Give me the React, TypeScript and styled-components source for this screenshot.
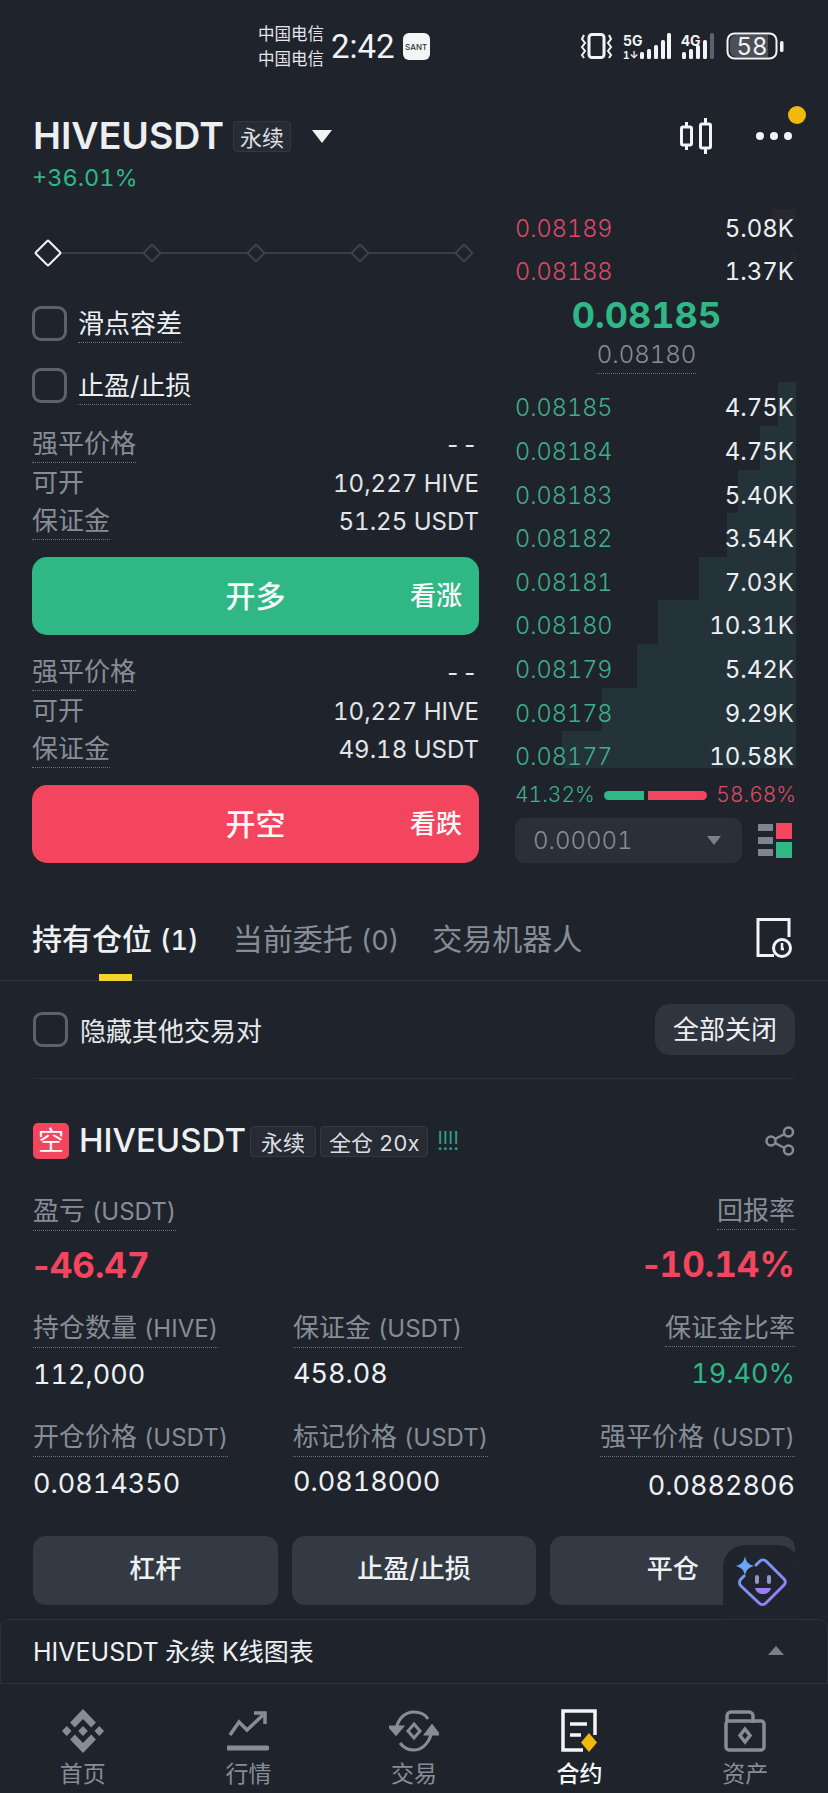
import React from 'react';
import styled, { createGlobalStyle } from 'styled-components';

const GlobalStyle = createGlobalStyle`
  html, body {
    margin: 0;
    padding: 0;
    background: #1f242c;
  }
  * {
    box-sizing: border-box;
  }
`;

const GREEN = '#2fb786';
const RED = '#f4455f';
const GRAY = '#878d96';
const WHITE = '#eef0f2';

const Page = styled.div`
  position: relative;
  width: 828px;
  height: 1793px;
  overflow: hidden;
  background: #1f242c;
  color: ${WHITE};
  font-family: Inter, 'Noto Sans CJK SC', sans-serif;
  font-variant-numeric: tabular-nums;
`;

const StatusBar = styled.div`
  display: flex;
  height: 100px;
  padding: 22px 38px 0 258px;
`;

const Carrier = styled.div`
  width: 73px;
  font-size: 16.5px;
  line-height: 25px;
  color: #e4e6e9;
`;

const Clock = styled.div`
  font-family: Roboto, sans-serif;
  font-size: 33px;
  font-weight: 400;
  line-height: 50px;
  color: #f2f3f5;
`;

const AppBadge = styled.div`
  width: 27px;
  height: 27px;
  margin: 11px 0 0 8px;
  border-radius: 6px;
  background: #f4f5f5;
  color: #333;
  font-size: 8px;
  font-weight: 500;
  line-height: 29px;
  text-align: center;
`;

const StatusIcons = styled.svg`
  margin-left: auto;
  margin-top: 10px;
`;

const TitleBar = styled.div`
  display: flex;
  align-items: center;
  height: 54px;
  margin-top: 9px;
  padding: 0 36px 0 33px;
`;

const Symbol = styled.div`
  font-size: 37.5px;
  font-weight: 600;
  line-height: 44px;
  color: #eceef0;
`;

const Tag = styled.span`
  display: inline-flex;
  align-items: center;
  height: 31px;
  padding: 0 ${(p) => p.$px || 6}px;
  margin-left: ${(p) => p.$ml || 6}px;
  border: 1px solid #333943;
  border-radius: 4px;
  background: #272c34;
  font-size: 22px;
  color: #dcdfe3;
`;

const DownCaret = styled.div`
  width: 0;
  height: 0;
  margin-left: 21px;
  border-left: 10px solid transparent;
  border-right: 10px solid transparent;
  border-top: 13px solid #f2f3f5;
`;

const TitleActions = styled.div`
  display: flex;
  align-items: center;
  gap: 43px;
  margin-left: auto;
`;

const Notice = styled.span`
  position: absolute;
  top: 106px;
  left: 788px;
  width: 18px;
  height: 18px;
  border-radius: 50%;
  background: #f0b90b;
`;

const Change = styled.div`
  padding-left: 32px;
  font-size: 23.5px;
  line-height: 29px;
  color: ${GREEN};
`;

const TradeArea = styled.div`
  display: grid;
  grid-template-columns: 447px 281px;
  column-gap: 36px;
  height: 656px;
  margin-top: 15px;
  padding-left: 32px;
`;

const FormColumn = styled.div`
  display: flex;
  flex-direction: column;
`;

const LeverSlider = styled.div`
  position: relative;
  display: flex;
  align-items: center;
  justify-content: space-between;
  height: 28px;
  margin: 32px 0 0 3px;
  padding-right: 8px;
  &::before {
    content: '';
    position: absolute;
    left: 10px;
    right: 12px;
    top: 13px;
    height: 2px;
    background: #373d46;
  }
`;

const LeverMark = styled.span`
  position: relative;
  width: ${(p) => (p.$active ? 20 : 14)}px;
  height: ${(p) => (p.$active ? 20 : 14)}px;
  margin: ${(p) => (p.$active ? '0 -3px 0 3px' : '0')};
  transform: rotate(45deg);
  border: 2px solid ${(p) => (p.$active ? '#f2f3f5' : '#3d434c')};
  border-radius: 2px;
  background: #1f242c;
`;

const CheckRow = styled.div`
  display: flex;
  align-items: flex-start;
  gap: 11px;
  margin-top: ${(p) => p.$mt}px;
`;

const Box = styled.span`
  flex: none;
  width: 35px;
  height: 35px;
  border: 3px solid #5d626a;
  border-radius: 9px;
`;

const Hint = styled.span`
  display: inline-block;
  font-size: 26px;
  line-height: 36px;
  color: ${(p) => p.$color || GRAY};
  border-bottom: 1px dotted ${(p) => (p.$plain ? 'transparent' : '#6b7079')};
  white-space: nowrap;
`;

const Latin = styled.span`
  font-size: 24px;
`;

const InfoList = styled.div`
  margin-top: ${(p) => p.$mt}px;
`;

const InfoRow = styled.div`
  display: flex;
  align-items: center;
  justify-content: space-between;
  height: ${(p) => p.$h}px;
`;

const InfoValue = styled.span`
  font-size: 24px;
  color: #e3e5e8;
`;

const EmptyValue = styled(InfoValue)`
  letter-spacing: 1.5px;
`;

const OrderButton = styled.div`
  position: relative;
  display: flex;
  align-items: center;
  justify-content: center;
  height: 78px;
  margin-top: 16px;
  padding-bottom: 5px;
  border-radius: 15px;
  background: ${(p) => p.$bg};
  font-size: 30px;
  font-weight: 500;
  color: #f7f8f8;
`;

const OrderSide = styled.span`
  position: absolute;
  right: 17px;
  font-size: 26px;
  font-weight: 500;
`;

const BookColumn = styled.div`
  display: flex;
  flex-direction: column;
`;

const BookRow = styled.div`
  position: relative;
  display: flex;
  align-items: center;
  justify-content: space-between;
  height: 43.6px;
  padding-right: 2px;
`;

const BidRows = styled.div`
  height: 386px;
  margin-top: -3.4px;
`;

const BidRow = styled(BookRow)`
  align-items: flex-start;
  padding-top: 13px;
  &:last-child {
    height: 37.2px;
  }
`;

const Depth = styled.span`
  position: absolute;
  top: 0;
  right: 0;
  bottom: 0;
  background: #24333a;
`;

const AskDepth = styled(Depth)`
  background: #2a2731;
  top: 2px;
  bottom: 32px;
`;

const Price = styled.span`
  position: relative;
  font-size: ${(p) => p.$fs || 23.5}px;
  font-weight: 300;
  line-height: 26px;
  color: ${(p) => p.$color};
`;

const Size = styled.span`
  position: relative;
  font-size: 24px;
  line-height: 26px;
  color: #eceef0;
`;

const MidBlock = styled.div`
  display: flex;
  flex-direction: column;
  align-items: center;
  height: 91.6px;
  padding-right: 18px;
`;

const MidPrice = styled.div`
  font-size: 36px;
  font-weight: 700;
  line-height: 42px;
  color: ${GREEN};
`;

const MarkPrice = styled.div`
  margin-top: 1px;
  font-size: 24px;
  font-weight: 300;
  line-height: 36px;
  color: ${GRAY};
  border-bottom: 1px dotted #6b7079;
`;

const RatioRow = styled.div`
  display: flex;
  align-items: center;
  height: 34px;
  margin-top: 10px;
`;

const RatioBar = styled.span`
  height: 9px;
  margin: ${(p) => p.$m};
  width: ${(p) => p.$w}px;
  background: ${(p) => p.$bg};
  border-radius: ${(p) => p.$r};
`;

const BookFooter = styled.div`
  display: flex;
  align-items: center;
  justify-content: space-between;
  margin-top: 6px;
  padding-right: 4px;
`;

const StepSelect = styled.div`
  display: flex;
  align-items: center;
  justify-content: space-between;
  width: 227px;
  height: 45px;
  padding: 0 21px 0 18px;
  border-radius: 9px;
  background: #2a2f38;
  font-size: 24px;
  font-weight: 300;
  color: ${GRAY};
`;

const SelectCaret = styled.span`
  border-left: 7px solid transparent;
  border-right: 7px solid transparent;
  border-top: 9px solid #7b8089;
`;

const TabBar = styled.div`
  display: flex;
  align-items: flex-start;
  height: 118px;
  padding: 55px 36px 0 32px;
  border-bottom: 1px solid #2e343c;
`;

const Tab = styled.div`
  position: relative;
  height: 63px;
  margin-right: ${(p) => p.$mr}px;
  font-size: 30px;
  font-weight: ${(p) => (p.$active ? 500 : 400)};
  line-height: 42px;
  color: ${(p) => (p.$active ? WHITE : GRAY)};
  &::after {
    content: '';
    display: ${(p) => (p.$active ? 'block' : 'none')};
    position: absolute;
    left: 50%;
    bottom: 0;
    width: 33px;
    height: 7px;
    margin-left: -16px;
    background: #f0d52f;
  }
`;

const TabCount = styled.span`
  font-size: 27px;
`;

const HistorySlot = styled.div`
  margin-left: auto;
`;

const HideRow = styled.div`
  display: flex;
  align-items: center;
  height: 98px;
  margin: 0 33px;
  border-bottom: 1px solid #2a3038;
`;

const HideLabel = styled.span`
  margin-left: 12px;
  font-size: 26px;
  color: #e6e8ea;
`;

const CloseAll = styled.div`
  margin-left: auto;
  padding: 0 18px;
  border-radius: 15px;
  background: #2f353e;
  font-size: 26px;
  line-height: 51px;
`;

const PositionHead = styled.div`
  display: flex;
  align-items: center;
  height: 36px;
  margin-top: 44px;
  padding: 0 33px;
`;

const SideBadge = styled.span`
  width: 36px;
  height: 36px;
  border-radius: 5px;
  background: ${RED};
  font-size: 26px;
  line-height: 35px;
  text-align: center;
  color: #fff;
`;

const PositionSymbol = styled.span`
  margin: -2px 0 0 10px;
  font-size: 33px;
  font-weight: 500;
`;

const RiskMarks = styled.span`
  margin: -2px 0 0 8px;
  font-size: 26px;
  font-weight: 300;
  letter-spacing: -2px;
  color: #2c9f87;
`;

const ShareWrap = styled.span`
  margin-left: auto;
  display: flex;
`;

const MetricRow = styled.div`
  display: grid;
  grid-template-columns: 260px 1fr auto;
  height: ${(p) => p.$h}px;
  margin-top: ${(p) => p.$mt || 0}px;
  padding: 0 33px;
`;

const Metric = styled.div`
  display: flex;
  flex-direction: column;
  align-items: ${(p) => (p.$right ? 'flex-end' : 'flex-start')};
  grid-column: ${(p) => p.$col};
`;

const MetricValue = styled.div`
  margin-top: ${(p) => p.$gap}px;
  font-size: ${(p) => (p.$big ? 35 : 27)}px;
  font-weight: ${(p) => (p.$big ? 700 : 400)};
  line-height: ${(p) => (p.$big ? 44 : 40)}px;
  color: ${(p) => p.$color || WHITE};
`;

const Minus = styled.span`
  margin: 0 -3px;
`;

const Actions = styled.div`
  display: grid;
  grid-template-columns: repeat(3, 1fr);
  column-gap: 14px;
  padding: 0 33px;
`;

const ActionButton = styled.div`
  height: 69px;
  border-radius: 13px;
  background: #343a43;
  font-size: 26px;
  font-weight: 500;
  line-height: 66px;
  text-align: center;
`;

const AssistantFab = styled.div`
  position: absolute;
  top: 1545px;
  left: 723px;
  display: flex;
  align-items: center;
  justify-content: center;
  width: 77px;
  height: 73px;
  padding-right: 2px;
  border-radius: 22px 22px 0 0;
  background: #20252d;
`;

const ChartBar = styled.div`
  display: flex;
  align-items: center;
  justify-content: space-between;
  height: 65px;
  margin-top: 14px;
  padding: 0 43px 3px 32px;
  border: 1px solid #2c323a;
  border-radius: 10px 10px 0 0;
  font-size: 25px;
`;

const UpCaret = styled.span`
  border-left: 8px solid transparent;
  border-right: 8px solid transparent;
  border-bottom: 9px solid #7b8089;
`;

const NavBar = styled.div`
  display: grid;
  grid-template-columns: repeat(5, 1fr);
  height: 110px;
  padding-top: 25px;
`;

const NavItem = styled.div`
  display: flex;
  flex-direction: column;
  align-items: center;
  color: ${(p) => (p.$active ? '#f4f5f6' : GRAY)};
`;

const NavIcon = styled.svg`
  display: block;
  flex: none;
`;

const NavLabel = styled.span`
  margin-top: 6px;
  font-size: 23px;
  font-weight: ${(p) => (p.$active ? 500 : 400)};
  line-height: 30px;
`;

const asks = [
  { price: '0.08189', size: '5.08K', depth: 24 },
  { price: '0.08188', size: '1.37K', depth: 3 },
];

const bids = [
  { price: '0.08185', size: '4.75K', depth: 18 },
  { price: '0.08184', size: '4.75K', depth: 36 },
  { price: '0.08183', size: '5.40K', depth: 58 },
  { price: '0.08182', size: '3.54K', depth: 69 },
  { price: '0.08181', size: '7.03K', depth: 97 },
  { price: '0.08180', size: '10.31K', depth: 138 },
  { price: '0.08179', size: '5.42K', depth: 159 },
  { price: '0.08178', size: '9.29K', depth: 194 },
  { price: '0.08177', size: '10.58K', depth: 234 },
];

const StatusGlyphs = () => (
  <StatusIcons width="210" height="30" viewBox="0 0 210 30" fill="#f2f3f5">
    <rect x="9" y="2.5" width="15" height="23" rx="3" fill="none" stroke="#f2f3f5" strokeWidth="3" />
    <path d="M4 3l-2 4 3 4-3 4 3 4-3 4 2 3M29 3l2 4-3 4 3 4-3 4 3 4-2 3" fill="none" stroke="#f2f3f5" strokeWidth="2" />
    <text x="43" y="14" fontSize="14" fontWeight="700" fontFamily="Inter, sans-serif">5G</text>
    <text x="43" y="27" fontSize="10" fontWeight="700" fontFamily="Inter, sans-serif">1↓</text>
    <rect x="60" y="20" width="4" height="7" rx="1.5" />
    <rect x="67" y="17" width="4" height="10" rx="1.5" />
    <rect x="74" y="13" width="4" height="14" rx="1.5" />
    <rect x="81" y="8" width="4" height="19" rx="1.5" />
    <rect x="87" y="1" width="4" height="26" rx="1.5" />
    <text x="101" y="14" fontSize="14" fontWeight="700" fontFamily="Inter, sans-serif">4G</text>
    <rect x="102" y="20" width="4" height="7" rx="1.5" />
    <rect x="109" y="17" width="4" height="10" rx="1.5" />
    <rect x="116" y="13" width="4" height="14" rx="1.5" />
    <rect x="123" y="8" width="4" height="19" rx="1.5" />
    <rect x="130" y="1" width="4" height="26" rx="1.5" fill="#5d626a" />
    <rect x="147.5" y="1.5" width="49" height="25" rx="7" fill="#1f242c" stroke="#f2f3f5" strokeWidth="2" />
    <path d="M150 9a6 6 0 0 1 6-6h32v22h-32a6 6 0 0 1-6-6z" fill="#4b4f57" />
    <rect x="200" y="9" width="3.5" height="11" rx="1.5" />
    <text x="172" y="23" fontSize="24" textAnchor="middle" fontFamily="Inter, sans-serif">58</text>
  </StatusIcons>
);

const CandleIcon = () => (
  <svg width="34" height="38" viewBox="0 0 34 38" fill="none" stroke="#f2f3f5" strokeWidth="3">
    <rect x="2.5" y="10" width="10" height="18" rx="1.5" />
    <path d="M7.5 5v5M7.5 28v5" />
    <rect x="21.5" y="7" width="10" height="24" rx="1.5" />
    <path d="M26.5 1v6M26.5 31v6" />
  </svg>
);

const DotsIcon = () => (
  <svg width="36" height="10" viewBox="0 0 36 10" fill="#f2f3f5">
    <circle cx="4" cy="5" r="4" />
    <circle cx="18" cy="5" r="4" />
    <circle cx="32" cy="5" r="4" />
  </svg>
);

const LayoutIcon = () => (
  <svg width="34" height="35" viewBox="0 0 34 35">
    <rect x="0" y="1" width="15" height="7" fill="#7f858e" />
    <rect x="0" y="14" width="15" height="7" fill="#7f858e" />
    <rect x="0" y="26" width="15" height="7" fill="#7f858e" />
    <rect x="18" y="0" width="16" height="16" fill={RED} />
    <rect x="18" y="19" width="16" height="16" fill={GREEN} />
  </svg>
);

const HistoryIcon = () => (
  <svg width="36" height="40" viewBox="0 0 36 40" fill="none" stroke="#f2f3f5" strokeWidth="3">
    <path d="M18 37.5H2V1.5h31V19" />
    <circle cx="26" cy="30" r="8.5" />
    <path d="M26 25v6h2" strokeWidth="2.5" />
  </svg>
);

const ShareIcon = () => (
  <svg width="30" height="30" viewBox="0 0 30 30" fill="none" stroke={GRAY} strokeWidth="2.5">
    <circle cx="23.5" cy="6" r="4.5" />
    <circle cx="6" cy="15" r="4.5" />
    <circle cx="23.5" cy="24" r="4.5" />
    <path d="M10 13l9.5-5M10 17l9.5 5" />
  </svg>
);

const AssistantIcon = () => (
  <svg width="52" height="52" viewBox="0 0 52 52" fill="none">
    <defs>
      <linearGradient id="fab" x1="0" y1="0" x2="1" y2="1">
        <stop offset="0" stopColor="#6f9dfb" />
        <stop offset="1" stopColor="#9d7cf2" />
      </linearGradient>
    </defs>
    <path
      d="M21 9l3.5-3.5a5 5 0 0 1 7 0L49 23a4 4 0 0 1 0 6L31 47a5 5 0 0 1-7 0L6 30a5 5 0 0 1 0-7l3-3"
      stroke="url(#fab)"
      strokeWidth="3"
      strokeLinecap="round"
    />
    <path d="M10 0c1 6 3 8 9 10-6 2-8 4-9 10-1-6-3-8-9-10 6-2 8-4 9-10z" fill="#6aa5fb" />
    <rect x="20" y="19" width="4" height="9" rx="2" fill="#8e97c8" />
    <rect x="32" y="19" width="4" height="9" rx="2" fill="#8e97c8" />
    <path d="M20 32h16c-1 4-4 6-8 6s-7-2-8-6z" fill="#9c7ef2" />
  </svg>
);

const HomeIcon = () => (
  <NavIcon width="42" height="44" viewBox="0 0 126.61 126.61" fill="currentColor" preserveAspectRatio="none">
    <path d="M38.73 53.2l24.59-24.58 24.6 24.6 14.3-14.31L63.32 0 24.43 38.9l14.3 14.3zM0 63.31l14.3-14.31 14.31 14.31-14.31 14.3zM38.73 73.41l24.59 24.59 24.6-24.6 14.31 14.29-38.9 38.91-38.91-38.88-.02-.02zM98 63.31l14.3-14.31 14.31 14.3-14.31 14.32zM77.83 63.3L63.32 48.78 52.59 59.51l-1.24 1.23-2.54 2.54 14.51 14.5 14.51-14.47z" />
  </NavIcon>
);

const MarketIcon = () => (
  <NavIcon width="42" height="44" viewBox="0 0 42 44" fill="none" stroke="currentColor" strokeWidth="3.5">
    <path d="M3 26l9-13 8 8L36 6" />
    <path d="M27 4h11v11" />
    <path d="M1 39h39" strokeWidth="5" strokeLinecap="round" />
  </NavIcon>
);

const TradeIcon = () => (
  <NavIcon width="50" height="44" viewBox="0 0 50 44" fill="none" stroke="currentColor" strokeWidth="3">
    <path d="M7 22C8 11 15 3 25 3c6 0 11 2 14 7" />
    <path d="M43 20c-1 11-8 21-18 21-6 0-11-3-14-7" />
    <path d="M1 18l6 7 6-7z" fill="currentColor" />
    <path d="M37 25l6-8 6 8z" fill="currentColor" />
    <path d="M25 15l6 7-6 7-6-7z" />
  </NavIcon>
);

const FuturesIcon = () => (
  <NavIcon width="38" height="44" viewBox="0 0 38 44" fill="none" stroke="currentColor" strokeWidth="3.5">
    <path d="M22 41H2V2h32v24" />
    <path d="M9 15h17M9 26h11" />
    <path d="M28 24l8 9.5-8 9.5-8-9.5z" fill="#f0b90b" stroke="none" />
  </NavIcon>
);

const AssetsIcon = () => (
  <NavIcon width="42" height="44" viewBox="0 0 42 44" fill="none" stroke="currentColor" strokeWidth="3.5">
    <path d="M3 14V7a4 4 0 0 1 4-4h18a4 4 0 0 1 4 4v7" />
    <rect x="2" y="12" width="38" height="29" rx="3" />
    <path d="M27 20l5 6.5-5 6.5-5-6.5z" transform="translate(-6 0)" />
  </NavIcon>
);

const tabs = [
  { label: '首页', icon: <HomeIcon /> },
  { label: '行情', icon: <MarketIcon /> },
  { label: '交易', icon: <TradeIcon /> },
  { label: '合约', icon: <FuturesIcon />, active: true },
  { label: '资产', icon: <AssetsIcon /> },
];

const OrderInfo = ({ margin, mt }: { margin: string; mt: number }) => (
  <InfoList $mt={mt}>
    <InfoRow $h={39}>
      <Hint>强平价格</Hint>
      <EmptyValue>--</EmptyValue>
    </InfoRow>
    <InfoRow $h={38}>
      <Hint $plain>可开</Hint>
      <InfoValue>10,227 HIVE</InfoValue>
    </InfoRow>
    <InfoRow $h={39}>
      <Hint>保证金</Hint>
      <InfoValue>{margin}</InfoValue>
    </InfoRow>
  </InfoList>
);

const App = () => {
  return (
    <Page>
      <GlobalStyle />
      <StatusBar>
        <Carrier>
          中国电信
          <br />
          中国电信
        </Carrier>
        <Clock>2:42</Clock>
        <AppBadge>SANT</AppBadge>
        <StatusGlyphs />
      </StatusBar>

      <TitleBar>
        <Symbol>HIVEUSDT</Symbol>
        <Tag $ml={9}>永续</Tag>
        <DownCaret />
        <TitleActions>
          <CandleIcon />
          <DotsIcon />
        </TitleActions>
      </TitleBar>
      <Notice />
      <Change>+36.01%</Change>

      <TradeArea>
        <FormColumn>
          <LeverSlider>
            <LeverMark $active />
            <LeverMark />
            <LeverMark />
            <LeverMark />
            <LeverMark />
          </LeverSlider>
          <CheckRow $mt={39}>
            <Box />
            <Hint $color="#eef0f2">滑点容差</Hint>
          </CheckRow>
          <CheckRow $mt={25}>
            <Box />
            <Hint $color="#eef0f2">止盈/止损</Hint>
          </CheckRow>
          <OrderInfo margin="51.25 USDT" mt={20} />
          <OrderButton $bg={GREEN}>
            开多
            <OrderSide>看涨</OrderSide>
          </OrderButton>
          <OrderInfo margin="49.18 USDT" mt={18} />
          <OrderButton $bg={RED}>
            开空
            <OrderSide>看跌</OrderSide>
          </OrderButton>
        </FormColumn>

        <BookColumn>
          {asks.map((row) => (
            <BookRow key={row.price}>
              <AskDepth style={{ width: row.depth }} />
              <Price $color="#dc4a64">{row.price}</Price>
              <Size>{row.size}</Size>
            </BookRow>
          ))}
          <MidBlock>
            <MidPrice>0.08185</MidPrice>
            <MarkPrice>0.08180</MarkPrice>
          </MidBlock>
          <BidRows>
            {bids.map((row) => (
              <BidRow key={row.price}>
                <Depth style={{ width: row.depth }} />
                <Price $color="#3fae8a">{row.price}</Price>
                <Size>{row.size}</Size>
              </BidRow>
            ))}
          </BidRows>
          <RatioRow>
            <Price $fs={21} $color="#3fae8a">
              41.32%
            </Price>
            <RatioBar $w={43} $m="0 0 0 9px" $bg={GREEN} $r="5px 0 0 5px" />
            <RatioBar $w={63} $m="0 9px 0 4px" $bg={RED} $r="0 5px 5px 0" />
            <Price $fs={21} $color="#dc4a64">
              58.68%
            </Price>
          </RatioRow>
          <BookFooter>
            <StepSelect>
              0.00001
              <SelectCaret />
            </StepSelect>
            <LayoutIcon />
          </BookFooter>
        </BookColumn>
      </TradeArea>

      <TabBar>
        <Tab $active $mr={34}>
          持有仓位 <TabCount>(1)</TabCount>
        </Tab>
        <Tab $mr={33}>
          当前委托 <TabCount>(0)</TabCount>
        </Tab>
        <Tab $mr={0}>交易机器人</Tab>
        <HistorySlot>
          <HistoryIcon />
        </HistorySlot>
      </TabBar>

      <HideRow>
        <Box />
        <HideLabel>隐藏其他交易对</HideLabel>
        <CloseAll>全部关闭</CloseAll>
      </HideRow>

      <PositionHead>
        <SideBadge>空</SideBadge>
        <PositionSymbol>HIVEUSDT</PositionSymbol>
        <Tag $ml={4} $px={10}>
          永续
        </Tag>
        <Tag $ml={4} $px={8}>
          全仓 20x
        </Tag>
        <RiskMarks>!!!!</RiskMarks>
        <ShareWrap>
          <ShareIcon />
        </ShareWrap>
      </PositionHead>

      <MetricRow $h={117} $mt={34}>
        <Metric $col="1">
          <Hint>
            盈亏 <Latin>(USDT)</Latin>
          </Hint>
          <MetricValue $big $gap={12} $color={RED}>
            <Minus>-</Minus>46.47
          </MetricValue>
        </Metric>
        <Metric $col="3" $right>
          <Hint>回报率</Hint>
          <MetricValue $big $gap={12} $color={RED}>
            <Minus>-</Minus>10.14%
          </MetricValue>
        </Metric>
      </MetricRow>
      <MetricRow $h={109}>
        <Metric $col="1">
          <Hint>
            持仓数量 <Latin>(HIVE)</Latin>
          </Hint>
          <MetricValue $gap={7}>112,000</MetricValue>
        </Metric>
        <Metric $col="2">
          <Hint>
            保证金 <Latin>(USDT)</Latin>
          </Hint>
          <MetricValue $gap={6}>458.08</MetricValue>
        </Metric>
        <Metric $col="3" $right>
          <Hint>保证金比率</Hint>
          <MetricValue $gap={7} $color={GREEN}>
            19.40%
          </MetricValue>
        </Metric>
      </MetricRow>
      <MetricRow $h={117}>
        <Metric $col="1">
          <Hint>
            开仓价格 <Latin>(USDT)</Latin>
          </Hint>
          <MetricValue $gap={7}>0.0814350</MetricValue>
        </Metric>
        <Metric $col="2">
          <Hint>
            标记价格 <Latin>(USDT)</Latin>
          </Hint>
          <MetricValue $gap={5}>0.0818000</MetricValue>
        </Metric>
        <Metric $col="3" $right>
          <Hint>
            强平价格 <Latin>(USDT)</Latin>
          </Hint>
          <MetricValue $gap={9}>0.0882806</MetricValue>
        </Metric>
      </MetricRow>

      <Actions>
        <ActionButton>杠杆</ActionButton>
        <ActionButton>止盈/止损</ActionButton>
        <ActionButton>平仓</ActionButton>
      </Actions>
      <AssistantFab>
        <AssistantIcon />
      </AssistantFab>

      <ChartBar>
        HIVEUSDT 永续 K线图表
        <UpCaret />
      </ChartBar>

      <NavBar>
        {tabs.map((tab) => (
          <NavItem key={tab.label} $active={tab.active}>
            {tab.icon}
            <NavLabel $active={tab.active}>{tab.label}</NavLabel>
          </NavItem>
        ))}
      </NavBar>
    </Page>
  );
};

export default App;
